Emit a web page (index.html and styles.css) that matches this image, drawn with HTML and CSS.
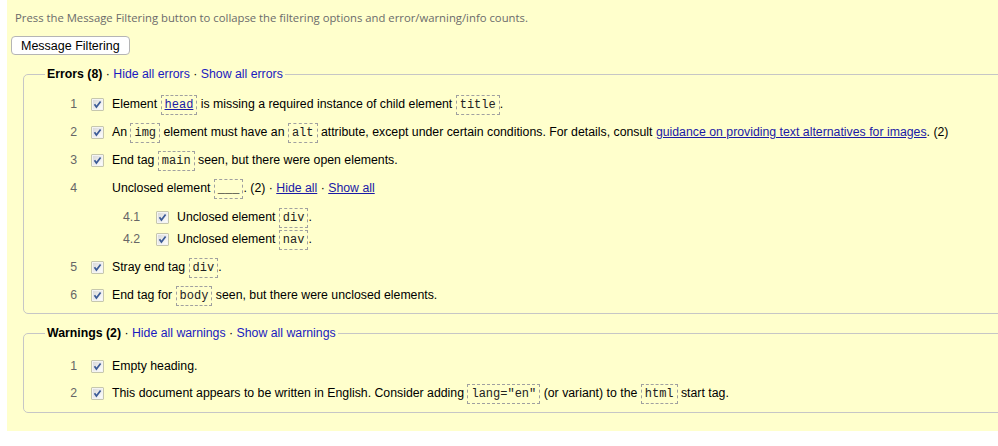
FILE: index.html
```html
<!DOCTYPE html>
<html>
<head>
<meta charset="utf-8">
<link rel="stylesheet" href="styles.css">
</head>
<body>
<svg class="defs" width="0" height="0"><defs><linearGradient id="g" x1="0" y1="0" x2="1" y2="1"><stop offset="0" stop-color="#d8d8d8"/><stop offset="1" stop-color="#ffffff"/></linearGradient></defs></svg>
<div class="panel">
  <p class="intro">Press the Message Filtering button to collapse the filtering options and error/warning/info counts.</p>
  <button class="toggle">Message Filtering</button>

  <fieldset class="group">
    <legend class="legend"><b>Errors (8)</b> · <a class="lk" href="#">Hide all errors</a> · <a class="lk" href="#">Show all errors</a></legend>
    <ol class="rows">
      <li class="row"><span class="num">1</span><span class="cb"><svg width="13" height="13" viewBox="0 0 13 13"><rect x="0.5" y="0.5" width="12" height="12" fill="#8e8f8f"/><rect x="1.5" y="1.5" width="10" height="10" fill="url(#g)" stroke="#f4f4f4"/><path d="M3.5 6.3 L5.4 9 L9.6 3.4" fill="none" stroke="#3b5a96" stroke-width="1.7"/></svg></span><span class="msg">Element <code class="cd"><a class="cl" href="#">head</a></code> is missing a required instance of child element <code class="cd">title</code>.</span></li>
      <li class="row"><span class="num">2</span><span class="cb"><svg width="13" height="13" viewBox="0 0 13 13"><rect x="0.5" y="0.5" width="12" height="12" fill="#8e8f8f"/><rect x="1.5" y="1.5" width="10" height="10" fill="url(#g)" stroke="#f4f4f4"/><path d="M3.5 6.3 L5.4 9 L9.6 3.4" fill="none" stroke="#3b5a96" stroke-width="1.7"/></svg></span><span class="msg">An <code class="cd">img</code> element must have an <code class="cd">alt</code> attribute, except under certain conditions. For details, consult <a class="il" href="#">guidance on providing text alternatives for images</a>. (2)</span></li>
      <li class="row"><span class="num">3</span><span class="cb"><svg width="13" height="13" viewBox="0 0 13 13"><rect x="0.5" y="0.5" width="12" height="12" fill="#8e8f8f"/><rect x="1.5" y="1.5" width="10" height="10" fill="url(#g)" stroke="#f4f4f4"/><path d="M3.5 6.3 L5.4 9 L9.6 3.4" fill="none" stroke="#3b5a96" stroke-width="1.7"/></svg></span><span class="msg">End tag <code class="cd">main</code> seen, but there were open elements.</span></li>
      <li class="row"><span class="num">4</span><span class="cb"></span><span class="msg">Unclosed element <code class="cd">___</code>. (2) · <a class="il" href="#">Hide all</a> · <a class="il" href="#">Show all</a></span>
        <ol class="rows sub">
          <li class="row"><span class="num">4.1</span><span class="cb"><svg width="13" height="13" viewBox="0 0 13 13"><rect x="0.5" y="0.5" width="12" height="12" fill="#8e8f8f"/><rect x="1.5" y="1.5" width="10" height="10" fill="url(#g)" stroke="#f4f4f4"/><path d="M3.5 6.3 L5.4 9 L9.6 3.4" fill="none" stroke="#3b5a96" stroke-width="1.7"/></svg></span><span class="msg">Unclosed element <code class="cd">div</code>.</span></li>
          <li class="row"><span class="num">4.2</span><span class="cb"><svg width="13" height="13" viewBox="0 0 13 13"><rect x="0.5" y="0.5" width="12" height="12" fill="#8e8f8f"/><rect x="1.5" y="1.5" width="10" height="10" fill="url(#g)" stroke="#f4f4f4"/><path d="M3.5 6.3 L5.4 9 L9.6 3.4" fill="none" stroke="#3b5a96" stroke-width="1.7"/></svg></span><span class="msg">Unclosed element <code class="cd">nav</code>.</span></li>
        </ol>
      </li>
      <li class="row"><span class="num">5</span><span class="cb"><svg width="13" height="13" viewBox="0 0 13 13"><rect x="0.5" y="0.5" width="12" height="12" fill="#8e8f8f"/><rect x="1.5" y="1.5" width="10" height="10" fill="url(#g)" stroke="#f4f4f4"/><path d="M3.5 6.3 L5.4 9 L9.6 3.4" fill="none" stroke="#3b5a96" stroke-width="1.7"/></svg></span><span class="msg">Stray end tag <code class="cd">div</code>.</span></li>
      <li class="row"><span class="num">6</span><span class="cb"><svg width="13" height="13" viewBox="0 0 13 13"><rect x="0.5" y="0.5" width="12" height="12" fill="#8e8f8f"/><rect x="1.5" y="1.5" width="10" height="10" fill="url(#g)" stroke="#f4f4f4"/><path d="M3.5 6.3 L5.4 9 L9.6 3.4" fill="none" stroke="#3b5a96" stroke-width="1.7"/></svg></span><span class="msg">End tag for <code class="cd">body</code> seen, but there were unclosed elements.</span></li>
    </ol>
  </fieldset>

  <fieldset class="group warn">
    <legend class="legend"><b>Warnings (2)</b> · <a class="lk" href="#">Hide all warnings</a> · <a class="lk" href="#">Show all warnings</a></legend>
    <ol class="rows">
      <li class="row"><span class="num">1</span><span class="cb"><svg width="13" height="13" viewBox="0 0 13 13"><rect x="0.5" y="0.5" width="12" height="12" fill="#8e8f8f"/><rect x="1.5" y="1.5" width="10" height="10" fill="url(#g)" stroke="#f4f4f4"/><path d="M3.5 6.3 L5.4 9 L9.6 3.4" fill="none" stroke="#3b5a96" stroke-width="1.7"/></svg></span><span class="msg">Empty heading.</span></li>
      <li class="row"><span class="num">2</span><span class="cb"><svg width="13" height="13" viewBox="0 0 13 13"><rect x="0.5" y="0.5" width="12" height="12" fill="#8e8f8f"/><rect x="1.5" y="1.5" width="10" height="10" fill="url(#g)" stroke="#f4f4f4"/><path d="M3.5 6.3 L5.4 9 L9.6 3.4" fill="none" stroke="#3b5a96" stroke-width="1.7"/></svg></span><span class="msg">This document appears to be written in English. Consider adding <code class="cd">lang="en"</code> (or variant) to the <code class="cd">html</code> start tag.</span></li>
    </ol>
  </fieldset>
</div>
</body>
</html>
```
FILE: styles.css
```css
html, body {
  margin: 0;
  padding: 0;
  overflow: hidden;
  background: #ffffff;
}
body {
  font-family: "Liberation Sans", Arial, sans-serif;
  font-size: 12.3px;
  color: #000;
}
.defs {
  position: absolute;
}
.panel {
  margin-left: 7px;
  width: 1010px;
  background: #ffffcc;
  padding: 10px 0 18px 4px;
  box-sizing: border-box;
}
.intro {
  margin: 0 0 0 4px;
  font-family: "Open Sans", "Noto Sans", sans-serif;
  font-size: 11.3px;
  line-height: 16px;
  color: #6b6b6b;
}
.toggle {
  display: block;
  margin: 10px 0 0 0;
  height: 19px;
  padding: 0 9px;
  font-family: "Liberation Sans", Arial, sans-serif;
  font-size: 12.5px;
  color: #000;
  background: #ffffff;
  border: 1px solid #b5b5b5;
  border-radius: 4px;
}
.group {
  margin: 11px 0 0 12px;
  padding: 0 0 8px 0;
  border: 1px solid #c6c6c6;
  border-radius: 5px;
  min-width: 0;
}
.group.warn {
  margin-top: 11px;
  padding-bottom: 9px;
}
.legend {
  margin-left: 21px;
  padding: 0 2px;
  line-height: 16px;
}
.lk {
  color: #1a1ac0;
  text-decoration: none;
}
.rows {
  list-style: none;
  margin: 0;
  padding: 12px 0 0 0;
}
.warn .rows {
  padding-top: 15px;
}
.row {
  display: grid;
  grid-template-columns: 53px 14px 13px 8px 1fr;
  grid-template-rows: 20px;
  align-items: center;
  margin-bottom: 8px;
}
.warn .row {
  margin-bottom: 7px;
}
.row:last-child,
.warn .row:last-child {
  margin-bottom: 0;
}
.num {
  grid-column: 1;
  text-align: right;
  color: #666666;
}
.cb {
  grid-column: 3;
  display: flex;
  width: 13px;
  height: 13px;
}
.msg {
  grid-column: 5;
  line-height: 20px;
  height: 20px;
  white-space: nowrap;
}
.sub {
  grid-column: 5;
  padding: 9px 0 0 0;
  margin-left: -47px;
}
.sub .row {
  grid-template-columns: 75px 16px 13px 8px 1fr;
  margin-bottom: 2px;
}
.sub .row:last-child {
  margin-bottom: 0;
}
.cd {
  display: inline-block;
  font-family: "Liberation Mono", "Courier New", monospace;
  font-size: 12px;
  line-height: 18px;
  padding: 0 3px;
  border: 1px dashed #a0a0a0;
  color: #222;
  vertical-align: middle;
}
.cl {
  color: #1a1aa6;
  text-decoration: underline;
}
.il {
  color: #1a1aa6;
  text-decoration: underline;
}
```
